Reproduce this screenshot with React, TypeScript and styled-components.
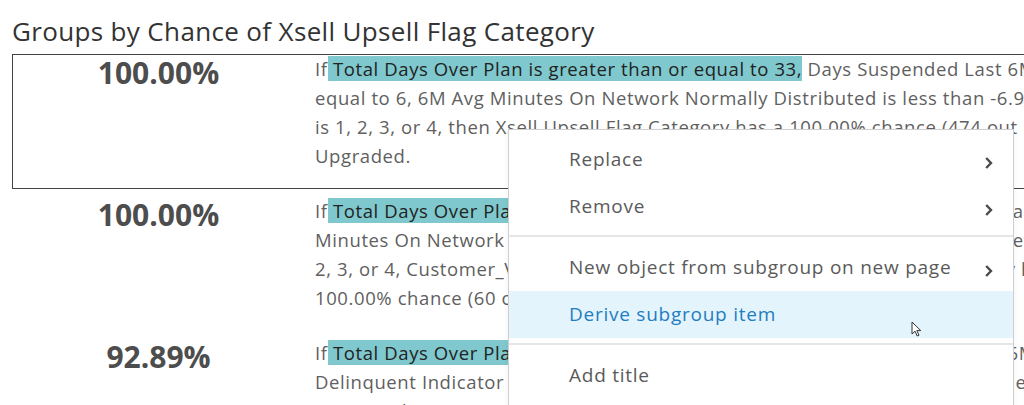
import * as React from "react";
import { createGlobalStyle, styled } from "styled-components";

const GlobalStyle = createGlobalStyle`
  html, body {
    margin: 0;
    padding: 0;
    background: #fff;
    overflow: hidden;
  }
  body {
    font-family: "Open Sans", Lato, sans-serif;
    color: #5c5c5c;
  }
`;

const Page = styled.div`
  position: relative;
  width: 1024px;
  height: 405px;
  overflow: hidden;
`;

const Title = styled.div`
  margin: 15px 0 7px 12px;
  font-size: 26px;
  line-height: 32px;
  letter-spacing: 0.35px;
  color: #333;
  white-space: nowrap;
`;

const Table = styled.div`
  margin-left: 12px;
  width: 1400px;
`;

const Row = styled.div<{ $selected?: boolean }>`
  display: grid;
  grid-template-columns: 291px 1fr;
  column-gap: 11px;
  box-sizing: border-box;
  height: 135px;
  margin-bottom: 7px;
  border: 1px solid ${(p) => (p.$selected ? "#444" : "transparent")};
`;

const Percent = styled.div`
  text-align: center;
  font-size: 30px;
  line-height: 36px;
  font-weight: 700;
  color: #4d4d4d;
`;

const Desc = styled.div`
  margin-top: -1px;
  font-size: 18.5px;
  line-height: 29px;
  letter-spacing: 0.6px;
  color: #5f5f5f;
  white-space: nowrap;
`;

const Line = styled.div``;

const Highlight = styled.span`
  background: #7fc8cd;
  color: #222;
`;

const Menu = styled.div`
  position: absolute;
  left: 508px;
  top: 129px;
  width: 506px;
  box-sizing: border-box;
  padding-top: 6px;
  background: #fff;
  border: 1px solid #cfcfcf;
  box-shadow: 0 2px 6px rgba(0, 0, 0, 0.06);
  height: 320px;
`;

const Item = styled.div<{ $active?: boolean }>`
  display: flex;
  align-items: center;
  justify-content: space-between;
  height: 47px;
  padding: 0 20px 0 60px;
  font-size: 19px;
  line-height: 47px;
  letter-spacing: 0.75px;
  color: ${(p) => (p.$active ? "#1f7dc1" : "#5a5a5a")};
  background: ${(p) => (p.$active ? "#e4f4fc" : "transparent")};
`;

const Separator = styled.div`
  height: 2px;
  margin: 5px 0 7px;
  background: #e6e6e6;
`;

const Chevron = styled.svg`
  width: 9px;
  height: 14px;
  margin-top: 7px;
`;

const Cursor = styled.svg`
  position: absolute;
  left: 911px;
  top: 321px;
  width: 11px;
  height: 16px;
`;

type Group = {
  percent: string;
  selected?: boolean;
  rest: string;
  lines: string[];
};

const groups: Group[] = [
  {
    percent: "100.00%",
    selected: true,
    rest: " Days Suspended Last 6M is less than or",
    lines: [
      "equal to 6, 6M Avg Minutes On Network Normally Distributed is less than -6.9, and Handset Age Group",
      "is 1, 2, 3, or 4, then Xsell Upsell Flag Category has a 100.00% chance (474 out of 474) of being",
      "Upgraded.",
    ],
  },
  {
    percent: "100.00%",
    rest: " Handset Age is 4 or 5, and 6M Avg",
    lines: [
      "Minutes On Network Normally Distributed is greater than or equal to -6.9, Device is 1,",
      "2, 3, or 4, Customer_Value is Low or Medium, then Xsell Upsell Flag Category has a",
      "100.00% chance (60 out of 60) of being Upgraded.",
    ],
  },
  {
    percent: "92.89%",
    rest: " Days Suspended Last 6M is less than 6M Avg",
    lines: [
      "Delinquent Indicator is 0, 1, 2, or 3, Handset Age Group is 1, 2, 3, or 4, and Network Tenure kind",
      "Category has a 92.89% chance (457 out of 492) of being Upgraded.",
    ],
  },
];

function ChevronIcon() {
  return (
    <Chevron viewBox="0 0 9 14">
      <path d="M2.2 2 L7 7 L2.2 12" fill="none" stroke="#4a4a4a" strokeWidth="2.4" />
    </Chevron>
  );
}

export default function App() {
  return (
    <Page>
      <GlobalStyle />
      <Title>Groups by Chance of Xsell Upsell Flag Category</Title>
      <Table>
        {groups.map((g, i) => (
          <Row key={i} $selected={g.selected}>
            <Percent>{g.percent}</Percent>
            <Desc>
              <Line>
                If<Highlight> Total Days Over Plan is greater than or equal to 33,</Highlight>
                {g.rest}
              </Line>
              {g.lines.map((l, j) => (
                <Line key={j}>{l}</Line>
              ))}
            </Desc>
          </Row>
        ))}
      </Table>
      <Menu>
        <Item>
          Replace
          <ChevronIcon />
        </Item>
        <Item>
          Remove
          <ChevronIcon />
        </Item>
        <Separator />
        <Item>
          New object from subgroup on new page
          <ChevronIcon />
        </Item>
        <Item $active>Derive subgroup item</Item>
        <Separator />
        <Item>Add title</Item>
      </Menu>
      <Cursor viewBox="0 0 11 16">
        <path d="M1 1 L1 13 L4 10.2 L6.2 15 L8 14.2 L5.8 9.6 L9.8 9.6 Z" fill="#fff" stroke="#333" strokeWidth="1" strokeLinejoin="round" />
      </Cursor>
    </Page>
  );
}
